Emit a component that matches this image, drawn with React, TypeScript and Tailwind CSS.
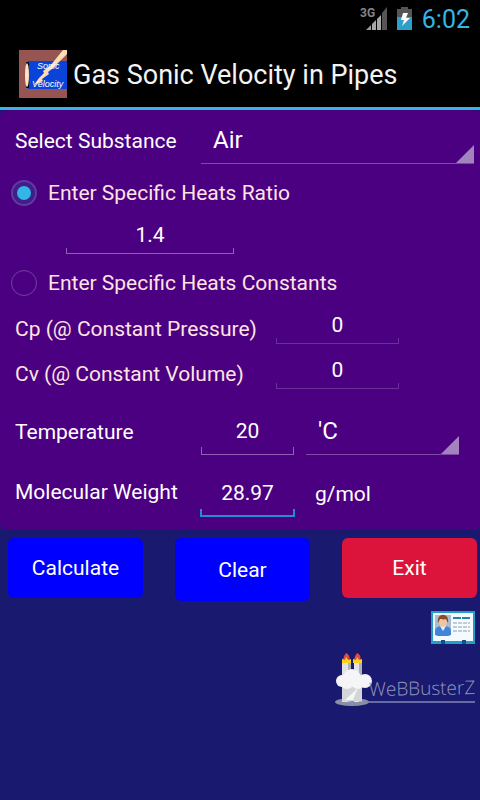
import type { ReactNode } from "react";

type FieldProps = {
  id: string;
  label: string;
  value: string;
  width: string;
  tall?: boolean;
  tone?: string;
};

function Field({ id, label, value, width, tall, tone = "border-[#9060b4]" }: FieldProps) {
  return (
    <div className={`flex flex-col ${width}`}>
      <input
        id={id}
        aria-label={label}
        defaultValue={value}
        className={`w-full bg-transparent text-center text-[21px] text-white outline-none ${tall ? "h-8" : "h-7 pt-[2px]"}`}
      />
      <div className={`border-x border-b ${tall ? "h-2" : "h-[6px]"} ${tone}`} />
    </div>
  );
}

function Spinner({ id, label, options, height }: { id: string; label: string; options: string[]; height: string }) {
  return (
    <div className={`relative w-full border-b border-[#7c4aa5] ${height}`}>
      <select
        id={id}
        aria-label={label}
        className="h-full w-full appearance-none bg-transparent pl-3 text-[24px] text-white outline-none"
      >
        {options.map((o) => (
          <option key={o}>{o}</option>
        ))}
      </select>
      <svg className="pointer-events-none absolute right-0 bottom-0 h-[18px] w-[18px]" viewBox="0 0 18 18">
        <path d="M18 0V18H0Z" fill="#a283bd" />
      </svg>
    </div>
  );
}

function Choice({ id, checked, children }: { id: string; checked?: boolean; children: ReactNode }) {
  return (
    <div className="flex h-14 items-center gap-[11px] pt-[2px] pl-[11px] text-[#ffe4e1]">
      <input
        id={id}
        type="radio"
        name="heats"
        defaultChecked={checked}
        className="flex h-[26px] w-[26px] appearance-none items-center justify-center rounded-full border border-[#7440a0] checked:border-2 checked:border-[#63399c] checked:bg-[#3e1f8c] checked:before:h-[14px] checked:before:w-[14px] checked:before:rounded-full checked:before:bg-[#33b5e5] checked:before:content-['']"
      />
      <label htmlFor={id}>{children}</label>
    </div>
  );
}

function AppIcon() {
  return (
    <svg className="h-12 w-12 shrink-0" viewBox="0 0 48 48">
      <rect width="48" height="48" fill="#965452" />
      <rect x="9" y="11" width="39" height="28" fill="#0a43d8" />
      <rect x="7" y="12" width="3" height="26" rx="1" fill="#000" />
      <ellipse cx="8" cy="25" rx="2" ry="12" fill="#ffe4c4" />
      <path d="M44 0h4v4L33 19l-4 3 1 2-7 5 1 2-9 4 5-7 5-5-1-2 7-5z" fill="#ffdcb4" />
      <g fill="#fff" fontFamily="'Liberation Sans', sans-serif" fontStyle="italic">
        <text x="18" y="19" fontSize="9">Sonic</text>
        <text x="13" y="37" fontSize="9">Velocity</text>
      </g>
    </svg>
  );
}

function StatusIcons() {
  return (
    <svg className="h-[30px] w-[56px]" viewBox="0 0 56 30">
      <text x="0" y="13" fontSize="12" fontWeight="bold" fill="#858585" fontFamily="Roboto, sans-serif">3G</text>
      <path d="M6 26 11 21V26Z" fill="#999" />
      <path d="M12 20 16 16V26H12ZM17 15 21 11V26H17Z" fill="#a8a8a8" />
      <path d="M22 9 27 3V26H22Z" fill="#555" />
      <path d="M41 3h7v2h4v11H37V5h4z" fill="#555" />
      <path d="M37 13h15v13H37z" fill="#2e9fc9" />
      <path d="M43 9h5l-2 5h4l-8 8 2-6h-3z" fill="#fff" />
    </svg>
  );
}

function ContactCard() {
  return (
    <svg className="h-[33px] w-11" viewBox="0 0 44 33">
      <path d="M0 0h44v33H0z" fill="#239ec8" />
      <path d="M2 2h40v28H2z" fill="#f4faff" />
      <path d="M10 29h4v4h-4zM31 29h4v4h-4z" fill="#12508f" />
      <path d="M4 4h16v17H4z" fill="#a9bdd0" />
      <path d="M4 24v-4c0-4 4-5 8-5s8 1 8 5v4l-3 1H7z" fill="#3f86d8" />
      <path d="M9 15h6l-3 5z" fill="#e6f1fb" />
      <ellipse cx="12" cy="11" rx="4" ry="5" fill="#f0c6a0" />
      <path d="M7 12c-2-11 12-11 10 0l-2-4c-3 1-5 0-6 0z" fill="#8a4a26" />
      <path d="M22 7h8m1 0h8" stroke="#2a80a8" strokeWidth="2" />
      <path d="M22 12h17M22 16h17M22 20h17" stroke="#8d9ea8" strokeWidth="1" strokeDasharray="4 1" />
    </svg>
  );
}

function BrandLogo() {
  return (
    <svg className="h-[56px] w-[140px]" viewBox="0 0 140 56">
      <ellipse cx="17" cy="50" rx="17" ry="4" fill="#8b8fa6" />
      <path d="M30 50H140" stroke="#8287b4" strokeWidth="1.500" />
      <path d="M7 10h9v40H7zM19 10h8v40h-8z" fill="#e2e2e4" />
      <path d="M13 10h3v40h-3zM24 10h3v40h-3z" fill="#b0b1b6" />
      <path d="M8 9c0-3 1-5 3-8 4 2 4 5 3 8zM19 9c0-3 1-5 3-8 4 2 4 5 3 8z" fill="#e04a40" />
      <path d="M7 11V7l3 1 1-3 2 3 3-1v4zM18 11V7l3 1 1-3 2 3 3-1v4z" fill="#ffd21c" />
      <path d="M7 34h20v15H7z" fill="#d4d5d9" />
      <g fill="#f5f5f8">
        <circle cx="7" cy="29" r="6" />
        <circle cx="17" cy="26" r="9" />
        <circle cx="30" cy="29" r="7" />
        <circle cx="12" cy="30" r="7" />
        <circle cx="23" cy="30" r="7" />
      </g>
      <path d="M10 48l13-12-5 12z" fill="#f5f5f8" />
      <text
        x="34"
        y="44"
        fontSize="19"
        fill="#9296b8"
        fontFamily="'Open Sans', 'Noto Sans', sans-serif"
        fontWeight="300"
        transform="rotate(-1 34 44)"
      >
        WeBBusterZ
      </text>
    </svg>
  );
}

export default function App() {
  return (
    <div className="min-h-screen bg-[#191970] font-[Roboto,sans-serif] text-[22px] text-white">
      <div className="flex h-[38px] items-center justify-end gap-[6px] bg-black pr-[10px]">
        <StatusIcons />
        <span className="pt-[2px] text-[25px] leading-9 text-[#33b5e5]">6:02</span>
      </div>
      <header className="flex h-[72px] items-center gap-[6px] border-b-[3px] border-[#33b5e5] bg-black pt-[3px] pl-[19px]">
        <AppIcon />
        <h1 className="pt-[2px] text-[27px] leading-9 text-[#f3f3f3]">Gas Sonic Velocity in Pipes</h1>
      </header>

      <main>
        <section className="rounded-md bg-[#4b0082] pt-px pb-[13px] text-[21px] leading-7">
          <div className="flex items-start pr-[6px]">
            <label htmlFor="substance" className="w-[201px] shrink-0 pt-4 pl-[15px]">Select Substance</label>
            <Spinner id="substance" label="Select Substance" options={["Air", "Methane", "Oxygen"]} height="h-[53px] pt-[6px]" />
          </div>

          <Choice id="ratio" checked>Enter Specific Heats Ratio</Choice>
          <div className="pl-[66px]">
            <Field id="gamma" label="Specific heats ratio" value="1.4" width="w-[168px]" />
          </div>

          <Choice id="constants">Enter Specific Heats Constants</Choice>
          <div className="flex text-[#ffe4e1]">
            <label htmlFor="cp" className="w-[276px] pt-[5px] pl-[15px]">Cp (@ Constant Pressure)</label>
            <Field id="cp" label="Cp" value="0" width="w-[123px]" tone="border-[#6a309a]" />
          </div>
          <div className="mt-[11px] flex text-[#ffe4e1]">
            <label htmlFor="cv" className="w-[276px] pt-[5px] pl-[15px]">Cv (@ Constant Volume)</label>
            <Field id="cv" label="Cv" value="0" width="w-[123px]" tone="border-[#6a309a]" />
          </div>

          <div className="mt-[26px] flex pr-[21px]">
            <label htmlFor="temperature" className="w-[201px] shrink-0 pt-[3px] pl-[15px]">Temperature</label>
            <Field id="temperature" label="Temperature" value="20" width="w-[93px] shrink-0" tall />
            <div className="ml-3 flex-1">
              <Spinner id="unit" label="Temperature unit" options={["'C", "'F", "K"]} height="h-10 pb-2" />
            </div>
          </div>

          <div className="mt-[22px] flex">
            <label htmlFor="weight" className="w-[200px] shrink-0 pt-px pl-[15px]">Molecular Weight</label>
            <Field id="weight" label="Molecular Weight" value="28.97" width="w-[95px]" tall tone="border-x-2 border-b-2 border-[#1e8fd0]" />
            <span className="pt-[3px] pl-5">g/mol</span>
          </div>
        </section>

        <div className="flex items-start justify-between pt-2 pr-[3px] pl-2 text-[21px]">
          <button className="h-[60px] w-[135px] rounded-md bg-[#0000ff] pt-[2px]">Calculate</button>
          <button className="h-[63px] w-[135px] rounded-md bg-[#0000ff] pt-[2px]">Clear</button>
          <button className="h-[60px] w-[135px] rounded-md bg-[#dc143c] pt-[2px]">Exit</button>
        </div>

        <div className="flex flex-col items-end gap-2 pt-[10px] pr-[5px]">
          <button aria-label="Contact"><ContactCard /></button>
          <BrandLogo />
        </div>
      </main>
    </div>
  );
}
